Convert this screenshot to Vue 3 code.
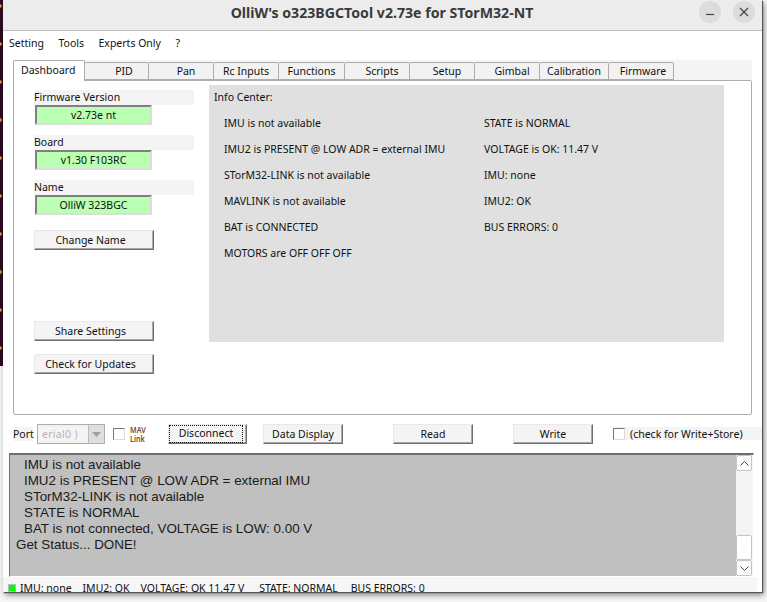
<script setup>
const tabs = ['Dashboard','PID','Pan','Rc Inputs','Functions','Scripts','Setup','Gimbal','Calibration','Firmware']
const fields = [
  { label: 'Firmware Version', value: 'v2.73e nt' },
  { label: 'Board', value: 'v1.30 F103RC' },
  { label: 'Name', value: 'OlliW 323BGC' },
]
const infoLeft = ['IMU is not available','IMU2 is PRESENT @ LOW ADR = external IMU','STorM32-LINK is not available','MAVLINK is not available','BAT is CONNECTED','MOTORS are OFF OFF OFF']
const infoRight = ['STATE is NORMAL','VOLTAGE is OK: 11.47 V','IMU: none','IMU2: OK','BUS ERRORS: 0']
const log = ['IMU is not available','IMU2 is PRESENT @ LOW ADR = external IMU','STorM32-LINK is not available','STATE is NORMAL','BAT is not connected, VOLTAGE is LOW: 0.00 V']
</script>

<template>
  <div class="desktop">
    <div class="strip"></div>
    <div class="window">
      <header class="titlebar">
        <div class="title">OlliW's o323BGCTool v2.73e for STorM32-NT</div>
        <div class="winbtns">
          <span class="winbtn"><svg width="12" height="12" viewBox="0 0 12 12"><path d="M2 8.500h8" stroke="#444" stroke-width="1.2"/></svg></span>
          <span class="winbtn"><svg width="12" height="12" viewBox="0 0 12 12"><path d="M2 2l8 8M10 2l-8 8" stroke="#444" stroke-width="1.2"/></svg></span>
        </div>
      </header>
      <nav class="menu">
        <span>Setting</span><span>Tools</span><span>Experts Only</span><span>?</span>
      </nav>
      <div class="tabs">
        <div v-for="(t,i) in tabs" :key="t" class="tab" :class="['t'+i,{active:i===0}]">{{ t }}</div>
      </div>
      <section class="panel">
        <div class="side">
          <div v-for="f in fields" :key="f.label" class="field">
            <div class="flabel">{{ f.label }}</div>
            <div class="fvalue">{{ f.value }}</div>
          </div>
          <button class="btn side-btn change">Change Name</button>
          <button class="btn side-btn share">Share Settings</button>
          <button class="btn side-btn check">Check for Updates</button>
        </div>
        <div class="info">
          <div class="info-title">Info Center:</div>
          <div class="info-cols">
            <div class="col-l"><div v-for="l in infoLeft" :key="l" class="info-row">{{ l }}</div></div>
            <div class="col-r"><div v-for="l in infoRight" :key="l" class="info-row">{{ l }}</div></div>
          </div>
        </div>
      </section>
      <div class="controls">
        <span class="port">Port</span>
        <span class="combo"><span class="combo-text">erial0 )</span><span class="combo-arrow"><svg width="9" height="5" viewBox="0 0 9 5"><path d="M0 0h9L4.500 5z" fill="#a0a0a0"/></svg></span></span>
        <span class="cb mav-cb"></span>
        <span class="mav">MAV<br>Link</span>
        <button class="btn disconnect"><span class="focus">Disconnect</span></button>
        <button class="btn data">Data Display</button>
        <button class="btn read">Read</button>
        <button class="btn write">Write</button>
        <span class="store"><span class="cb"></span><span class="store-label">(check for Write+Store)</span></span>
      </div>
      <section class="logbox">
        <div class="logtext">
          <div v-for="l in log" :key="l" class="logrow indent">{{ l }}</div>
          <div class="logrow">Get Status... DONE!</div>
        </div>
        <div class="scroll">
          <span class="sbtn"><svg width="9" height="5" viewBox="0 0 9 5"><path d="M.5 4.500l4-4 4 4" fill="none" stroke="#444"/></svg></span>
          <span class="thumb"></span>
          <span class="sbtn"><svg width="9" height="5" viewBox="0 0 9 5"><path d="M.5.500l4 4 4-4" fill="none" stroke="#444"/></svg></span>
        </div>
      </section>
      <footer class="status">
        <span class="led"></span>
        <span class="st s1">IMU: none</span><span class="st s2">IMU2: OK</span><span class="st s3">VOLTAGE: OK 11.47 V</span><span class="st s4">STATE: NORMAL</span><span class="st s5">BUS ERRORS: 0</span>
      </footer>
    </div>
  </div>
</template>

<style>
html, body { margin: 0; background: #fff; }
</style>

<style scoped>
.desktop { position: relative; width: 767px; height: 602px; overflow: hidden; background: #f6f6f6; font-family: "Liberation Sans", Arial, sans-serif; font-size: 11px; color: #111; }
.strip { position: absolute; left: 0; top: 0; width: 3px; height: 366px; background: radial-gradient(circle at 0 22px, #d98a3a 0 1.500px, transparent 2px) 0 0 / 3px 38px repeat-y, #2c0a22; background-position: 0 -16px, 0 0; }
.window { position: absolute; left: 3px; top: 0; width: 759px; height: 592px; background: #fff; box-shadow: 1px 1px 1px #555, 2px 3px 6px rgba(0,0,0,.45); display: flex; flex-direction: column; }
.titlebar { height: 31px; flex: none; box-sizing: border-box; background: #ececec; border-bottom: 1px solid #bdbdbd; display: flex; align-items: center; position: relative; padding-bottom: 6px; }
.title { width: 100%; text-align: center; font: 700 14.150px "Noto Sans", "Open Sans", sans-serif; color: #3a3a3a; padding-right: 1px; box-sizing: border-box; }
.winbtns { position: absolute; right: 7px; top: 1px; display: flex; gap: 12px; }
.winbtn { width: 22px; height: 22px; border-radius: 50%; background: #dcdcdc; display: flex; align-items: center; justify-content: center; }
.menu { height: 29px; flex: none; background: #fff; display: flex; align-items: center; padding-left: 6px; gap: 14.500px; font-family: "Noto Sans", sans-serif; font-size: 10.500px; padding-bottom: 6px; box-sizing: border-box; }
.tabs { display: flex; align-items: flex-end; height: 20px; margin: 0 10px; background: #f4f4f4; flex: none; position: relative; z-index: 1; }
.tab { height: 18px; box-sizing: border-box; flex: none; background: #f2f2f2; border: 1px solid #adadad; border-left: 0; font-family: "Noto Sans", sans-serif; font-size: 10.500px; text-align: center; line-height: 16px; border-radius: 0 2px 0 0; width: 65px; }
.tab.active { width: 72px; height: 21px; margin-bottom: -1px; background: #fff; border-left: 1px solid #adadad; border-bottom: 0; text-align: left; padding-left: 7px; line-height: 19px; border-radius: 2px 2px 0 0; }
.t1 { width: 64px; padding-left: 15px; }
.t2, .t5, .t6, .t7 { padding-left: 10px; }
.t4 { width: 66px; }
.t8 { width: 69px; }
.t9 { padding-left: 4px; }
.panel { margin: 0 10px; height: 335px; flex: none; background: #fff; border: 1px solid #adadad; box-sizing: border-box; display: flex; border-radius: 0 2px 2px 2px; }
.side { width: 175px; flex: none; position: relative; padding: 9px 0 0 20px; box-sizing: border-box; display: flex; flex-direction: column; }
.field { width: 160px; margin-bottom: 10px; }
.flabel { height: 15px; background: #f4f4f4; line-height: 15px; font-family: "Noto Sans", sans-serif; font-size: 10.500px; }
.fvalue { margin: 0 0 0 1px; width: 117px; height: 20px; background: #bbffb3; border: 2px solid; border-color: #808080 #dcdcdc #dcdcdc #808080; box-sizing: border-box; text-align: center; line-height: 16px; font-family: "Noto Sans", sans-serif; font-size: 10.500px; }
.btn { box-sizing: border-box; background: #f4f4f4; border: 1px solid; border-color: #e8e8e8 #6e6e6e #6e6e6e #e8e8e8; box-shadow: inset -1px -1px 0 #a8a8a8; font-family: "Noto Sans", sans-serif; font-size: 10.500px; color: #111; padding: 0; height: 20px; flex: none; }
.side-btn { width: 120px; margin-left: 0; padding-right: 7px; }
.change { margin-top: 5px; }
.share { margin-top: 71px; }
.check { margin-top: 13px; }
.info { margin-top: 4px; width: 515px; height: 257px; margin-left: 20px; flex: none; background: #e0e0e0; padding: 5px 5px; box-sizing: border-box; font-family: "Noto Sans", sans-serif; font-size: 10.500px; }
.info-title { height: 15px; line-height: 15px; }
.info-cols { display: flex; padding: 5px 0 0 10px; }
.col-l { width: 260px; }
.info-row { height: 26px; line-height: 26px; }
.controls { height: 38px; flex: none; position: relative; background: #fff; display: flex; align-items: center; font-family: "Noto Sans", sans-serif; font-size: 10.500px; padding: 0 0 0 10px; box-sizing: border-box; }
.port { background: #f4f4f4; width: 20px; margin-right: 4px; flex: none; }
.combo { width: 68px; height: 20px; flex: none; background: #f0f0f0; box-sizing: border-box; border: 1px solid #adadad; display: flex; align-items: center; }
.combo-text { flex: 1; color: #b5b5b5; padding-left: 4px; background: #f4f4f4; letter-spacing: .3px; }
.combo-arrow { width: 16px; height: 18px; background: #dedede; border-left: 1px solid #bbb; display: flex; align-items: center; justify-content: center; box-sizing: border-box; }
.cb { display: inline-block; width: 12px; height: 12px; box-sizing: border-box; border: 1px solid; border-color: #777 #dcdcdc #dcdcdc #777; background: #fff; flex: none; }
.mav-cb { margin-left: 8px; }
.mav { font-size: 9px; line-height: 9px; color: #7a4a1a; margin-left: 5px; width: 21px; font-weight: 600; flex: none; transform: scaleX(.8); transform-origin: left; }
.disconnect { width: 79px; margin-left: 17px; padding-right: 3px; }
.focus { display: block; box-sizing: border-box; height: 18px; border: 1px dotted #111; line-height: 15px; }
.data { width: 80px; margin-left: 16px; }
.read { width: 80px; margin-left: 50px; }
.write { width: 80px; margin-left: 40px; }
.store { position: absolute; left: 610px; right: 0; top: 12px; height: 13px; background: #f4f4f4; display: flex; align-items: center; }
.store-label { margin-left: 5px; }
.logbox { margin: 0 8px 0 6px; height: 124px; flex: none; background: #c0c0c0; border: 1px solid; border-color: #6e6e6e #fff #fff #6e6e6e; border-width: 2px 1px 1px 1px; display: flex; box-sizing: border-box; }
.logtext { flex: 1; padding: 2px 0 0 6px; font-size: 13.400px; line-height: 16px; color: #1a1a1a; }
.indent { padding-left: 8px; }
.scroll { width: 17px; flex: none; background: #f4f4f4; display: flex; flex-direction: column; padding-top: 0; box-sizing: border-box; }
.sbtn { width: 16px; height: 16px; flex: none; background: #fff; border: 1px solid #c4c4c4; box-sizing: border-box; border-radius: 2px; display: flex; align-items: center; justify-content: center; }
.thumb { width: 16px; height: 25px; flex: none; margin-top: auto; background: #fff; border: 1px solid #c4c4c4; box-sizing: border-box; border-radius: 2px; }
.status { height: 15px; flex: none; margin-right: 5px; background: #f6f6f6; display: flex; align-items: flex-start; padding-left: 6px; font-family: "Noto Sans", sans-serif; font-size: 10.500px; position: relative; overflow: hidden; }
.led { width: 6px; height: 6px; background: #0f0; border: 1px solid #bbb; position: absolute; left: 5px; top: 7px; }
.st { line-height: 14px; margin-top: 4px; white-space: nowrap; }
.s1 { margin-left: 11px; }
.s2 { margin-left: 11px; }
.s3 { margin-left: 11px; }
.s4 { margin-left: 15px; }
.s5 { margin-left: 13px; }
</style>
